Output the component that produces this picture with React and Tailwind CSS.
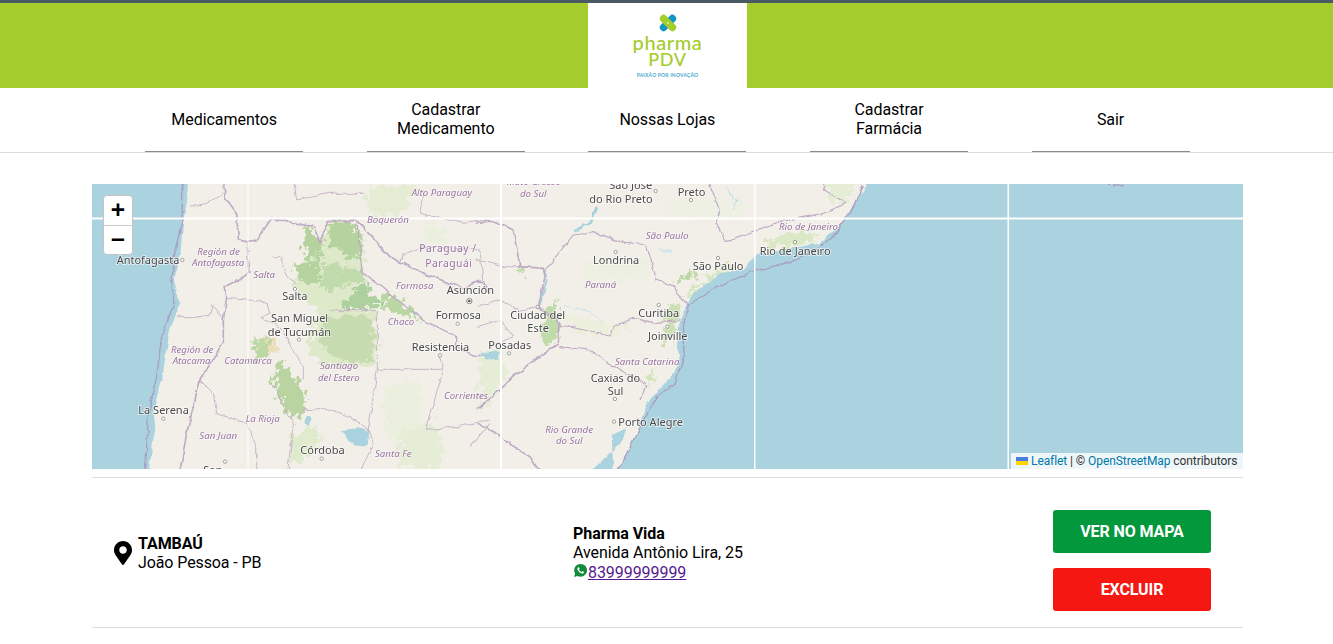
import React from "react";
import { FaMapMarkerAlt } from "react-icons/fa";
import { IoLogoWhatsapp } from "react-icons/io";

const navItems = [["Medicamentos"], ["Cadastrar", "Medicamento"], ["Nossas Lojas"], ["Cadastrar", "Farmácia"], ["Sair"]];

const City = ({ x, y, children }) => (
  <text x={x} y={y} fontSize="33" fill="#484848" stroke="#ffffff" strokeOpacity="0.7" strokeWidth="5" paintOrder="stroke" fontFamily="'Noto Sans', sans-serif">{children}</text>
);
const Reg = ({ x, y, children }) => (
  <text x={x} y={y} fontSize="29" fontStyle="italic" fill="#9a72a0" stroke="#ffffff" strokeOpacity="0.55" strokeWidth="4" paintOrder="stroke" fontFamily="'Noto Sans', sans-serif">{children}</text>
);
const Dot = ({ x, y }) => <circle cx={x} cy={y} r="5" fill="#fff" stroke="#777" strokeWidth="2" />;
const Line = ({ p, w = 4, c = "#bfabc4" }) => <polyline points={p} fill="none" stroke={c} strokeWidth={w} strokeLinejoin="round" />;
const Patch = ({ p, c = "#c9dfaf" }) => <polygon points={p} fill={c} />;
const Big = ({ x, y, children }) => (
  <text x={x} y={y} fontSize="31" letterSpacing="1.5" fill="#9a72a0" stroke="#fff" strokeOpacity="0.55" strokeWidth="4" paintOrder="stroke" fontFamily="'Noto Sans', sans-serif">{children}</text>
);

function MapDrawing() {
  return (
    <svg viewBox="92 184 1151 285" className="block w-full h-full">
      <defs>
        <filter id="rough" filterUnits="userSpaceOnUse" x="-200" y="-200" width="2800" height="1400">
          <feTurbulence type="fractalNoise" baseFrequency="0.035" numOctaves="3" seed="4" result="n" />
          <feDisplacementMap in="SourceGraphic" in2="n" scale="14" xChannelSelector="R" yChannelSelector="G" />
          <feGaussianBlur stdDeviation="0.9" />
        </filter>
        <filter id="mottle" filterUnits="userSpaceOnUse" x="-200" y="-200" width="2800" height="1400">
          <feTurbulence type="fractalNoise" baseFrequency="0.045" numOctaves="4" seed="9" result="n" />
          <feDisplacementMap in="SourceGraphic" in2="n" scale="60" xChannelSelector="R" yChannelSelector="G" />
          <feGaussianBlur stdDeviation="2" />
        </filter>
        <filter id="soft" filterUnits="userSpaceOnUse" x="0" y="100" width="1400" height="500">
          <feGaussianBlur stdDeviation="0.25" />
        </filter>
      </defs>
      <rect x="92" y="184" width="1151" height="285" fill="#f2efe9" />
      <g transform="translate(90 180) scale(0.33333)">
        <g filter="url(#mottle)">
          <Patch p="650,140 690,185 715,125 790,125 820,180 820,295 750,390 860,390 860,560 700,560 650,500 690,380 640,370 610,300 640,230" c="#dde9c8" />
          <Patch p="650,140 690,185 700,150 690,240 640,230" c="#b4d39e" />
          <Patch p="715,125 790,125 820,200 790,240 720,200" c="#b4d39e" />
          <Patch p="610,260 690,235 690,300 640,310" c="#b4d39e" />
          <Patch p="700,250 800,270 820,295 740,330 690,330" c="#c2dbad" />
          <Patch p="820,300 880,380 750,390" c="#add19e" />
          <Patch p="700,410 850,410 850,540 770,550 690,500" c="#c6dcb0" />
          <Patch p="880,345 910,345 1000,425 930,400 880,380" c="#b9d6a3" />
          <Patch p="560,540 620,590 650,680 610,725 550,620" c="#b9d4a0" />
          <Patch p="490,480 535,475 545,530 490,535" c="#bdd7a5" />
          <Patch p="535,480 565,480 560,520 540,515" c="#ecdcb8" />
          <Patch p="600,770 680,735 690,800 600,865" c="#e0ebcd" />
          <Patch p="830,20 985,12 940,100 830,110" c="#e4edd4" />
          <Patch p="1010,130 1090,150 1060,200 1000,180" c="#ebefdd" />
          <Patch p="880,620 990,600 990,780 890,770" c="#ebefdd" />
          <Patch p="930,760 1040,720 1060,865 920,865" c="#e6edd6" />
        </g>
      </g>
      <g transform="translate(480 180) scale(0.33333)">
        <g filter="url(#mottle)">
          <Patch p="1040,12 1130,12 1100,70 1050,60" c="#e4edd4" />
          <Patch p="575,310 640,270 650,290 590,310" c="#bdd8a6" />
          <Patch p="620,340 720,260 780,255 700,295 630,350" c="#d6e6c0" />
          <Patch p="840,185 920,165 1020,155 990,185 880,205" c="#dbe8c6" />
          <Patch p="570,370 605,360 595,420 575,490 545,490 555,420" c="#cde0b5" />
          <Patch p="200,395 235,355 235,470 200,500 180,480" c="#c1daa9" />
          <Patch p="110,270 140,265 130,290" c="#c1daa9" />
          <Patch p="500,590 530,570 510,620" c="#d3e4bd" />
          <Patch p="0,520 60,510 90,590 0,690" c="#e6edd6" />
          <Patch p="300,250 500,240 520,300 320,300" c="#edf0e0" />
          <Patch p="250,400 480,450 400,470 280,460" c="#ebefdc" />
          <Patch p="550,60 800,50 790,120 560,110" c="#eef0e3" />
        </g>
      </g>
      <g transform="translate(90 180) scale(0.33333)">
        <g filter="url(#rough)">
          <polygon points="-20,-20 288,-20 292,60 280,120 272,210 252,300 270,370 242,440 226,530 216,600 190,690 196,740 172,900 -20,900" fill="#aad3df" />
          <polygon points="752,757 805,742 835,752 830,795 795,797" fill="#aad3df" />
          <ellipse cx="655" cy="720" rx="9" ry="13" fill="#aad3df" />
          <Line p="280,-10 275,130 255,210 245,310 252,370 215,470 200,590 175,700 165,900" w="4" c="#a99dc0" />
          <Line p="400,-10 405,50 440,100 445,180 470,185 500,180 545,115 590,125 670,140 690,185 715,122 800,122 900,230 1000,280 1120,325 1170,300 1200,340" w="5" />
          <Line p="470,185 480,280 405,320 410,350 400,420 400,490 330,600 290,760 265,900" w="5" />
          <Line p="800,122 820,280 1000,420 1100,470 1100,500 1160,530 1200,520" w="4" />
          <Line p="410,355 530,365 540,400 510,410 570,440 640,560 640,600" w="2.5" />
          <Line p="720,392 862,392 862,568 1058,568 1050,530" w="2.5" />
          <Line p="862,568 835,750 850,790 800,900" w="2.5" />
          <Line p="550,620 610,730 590,900" w="2.5" />
          <Line p="640,690 700,685 800,720 835,750" w="2.5" />
          <Line p="400,420 370,375 360,410 260,410" w="2.5" />
          <Line p="330,600 370,640 380,700 470,730 500,800 500,900" w="2.5" />
          <Line p="1060,570 1040,640 1010,750 1100,740 1200,720" w="2.5" />
          <Line p="1140,800 1200,730" w="3" />
          <Line p="300,80 350,70 400,40" w="2.5" />
          <Line p="610,-10 620,60 700,40 825,40" w="2.5" />
          <Line p="1000,30 990,100 1120,130 1200,120" w="2.5" />
          <Line p="930,250 940,225 1000,200 1170,210 1180,320" w="2.5" />
          <Line p="550,230 570,230 590,290 620,310" w="2.5" />
        </g>
      </g>
      <g transform="translate(480 180) scale(0.33333)">
        <g filter="url(#rough)">
          <polygon points="1170,-20 1160,15 1105,100 1090,130 1040,170 1020,190 960,200 880,215 830,225 790,270 720,280 630,350 600,420 590,500 600,530 575,590 500,670 470,760 400,900 2400,900 2400,-20" fill="#aad3df" />
          <polygon points="395,765 440,745 425,790 370,840 335,870 400,870" fill="#aad3df" />
          <polygon points="0,515 60,515 55,540 20,535" fill="#aad3df" />
          <Line p="280,155 330,125 350,80" w="6" c="#a3cfdd" />
          <Line p="195,270 200,300 180,375" w="5" c="#a3cfdd" />
          <Line p="740,25 770,60 760,85" w="3" c="#b5dbe6" />
          <Line p="540,210 580,215" w="5" c="#cfe3ea" />
          <Line p="250,380 330,395 370,430" w="3" c="#cfe3ea" />
          <Line p="1150,15 1110,100 1050,180 950,240 820,275 720,315 625,375 610,440 615,520 585,610 530,650 470,760 400,900" w="4" c="#a99dc0" />
          <Line p="-10,130 50,125 100,150 120,260 190,265 195,290 175,380 240,430 235,490 180,530 100,590 60,630 -10,690" w="5" />
          <Line p="195,270 280,165 340,155 420,185 500,195 530,300 585,320 590,340 625,375" w="3.5" />
          <Line p="680,-10 720,90 710,130 735,185 830,150 900,125 1030,100 1100,70 1030,30 1040,-10" w="3.5" />
          <Line p="240,435 390,465 400,440 460,415 530,430 600,420" w="3.5" />
          <Line p="235,500 330,510 420,570 480,600 500,620 480,660" w="3.5" />
          <Line p="-10,730 50,760 100,800 150,830 195,900" w="5" />
          <Line p="-10,240 70,260 120,260" w="2.5" />
          <Line p="-10,380 60,360 120,390 170,380" w="2.5" />
          <Line p="-10,440 60,420 100,470 30,500" w="2.5" />
          <path d="M1880 12q14 -8 22 6q12 -12 26 -2" fill="none" stroke="#a99dc0" strokeWidth="4" />
        </g>
      </g>
      <g fill="#ffffff">
        <rect x="92" y="217.5" width="1151" height="2" />
        <rect x="247.5" y="184" width="1" height="285" />
        <rect x="500" y="184" width="2" height="285" />
        <rect x="754" y="184" width="1.5" height="285" />
        <rect x="1007.5" y="184" width="1.5" height="285" />
      </g>
      <g filter="url(#soft)">
        <g transform="translate(90 180) scale(0.33333)">
          <Reg x="965" y="48">Alto Paraguay</Reg>
          <Reg x="831" y="130">Boquerón</Reg>
          <Big x="988" y="217">Paraguay /</Big>
          <Big x="1006" y="260">Paraguái</Big>
          <Reg x="322" y="224">Región de</Reg>
          <Reg x="306" y="259">Antofagasta</Reg>
          <Reg x="490" y="294">Salta</Reg>
          <Reg x="918" y="327">Formosa</Reg>
          <Reg x="893" y="434">Chaco</Reg>
          <Reg x="243" y="518">Región de</Reg>
          <Reg x="248" y="553">Atacama</Reg>
          <Reg x="403" y="553">Catamarca</Reg>
          <Reg x="690" y="568">Santiago</Reg>
          <Reg x="684" y="603">del Estero</Reg>
          <Reg x="1062" y="657">Corrientes</Reg>
          <Reg x="467" y="727">La Rioja</Reg>
          <Reg x="328" y="778">San Juan</Reg>
          <Reg x="855" y="832">Santa Fe</Reg>
          <Dot x="277" y="240" /><Dot x="615" y="327" /><Dot x="627" y="479" /><Dot x="1103" y="431" /><Dot x="1050" y="526" /><Dot x="220" y="716" /><Dot x="695" y="836" /><Dot x="405" y="845" />
          <circle cx="1138" cy="363" r="8" fill="#fff" stroke="#555" strokeWidth="2" /><circle cx="1138" cy="363" r="4" fill="#555" />
          <City x="80" y="252">Antofagasta</City>
          <City x="577" y="360">Salta</City>
          <City x="543" y="427">San Miguel</City>
          <City x="533" y="467">de Tucumán</City>
          <City x="1070" y="343">Asunción</City>
          <City x="1037" y="417">Formosa</City>
          <City x="965" y="513">Resistencia</City>
          <City x="145" y="703">La Serena</City>
          <City x="631" y="823">Córdoba</City>
          <City x="340" y="882">San</City>
        </g>
        <g transform="translate(480 180) scale(0.33333)">
          <Reg x="80" y="16">Mato Grosso</Reg>
          <Reg x="120" y="52">do Sul</Reg>
          <Reg x="497" y="178">São Paulo</Reg>
          <Reg x="315" y="324">Paraná</Reg>
          <Reg x="897" y="150">Rio de Janeiro</Reg>
          <Reg x="405" y="556">Santa Catarina</Reg>
          <Reg x="196" y="758">Rio Grande</Reg>
          <Reg x="228" y="793">do Sul</Reg>
          <Dot x="527" y="33" /><Dot x="633" y="60" /><Dot x="407" y="216" /><Dot x="714" y="234" /><Dot x="945" y="186" /><Dot x="536" y="375" /><Dot x="562" y="440" /><Dot x="173" y="381" /><Dot x="87" y="520" /><Dot x="405" y="657" /><Dot x="402" y="725" />
          <City x="388" y="28">São José</City>
          <City x="328" y="68">do Rio Preto</City>
          <City x="593" y="48">Preto</City>
          <City x="339" y="251">Londrina</City>
          <City x="638" y="269">São Paulo</City>
          <City x="839" y="226">Rio de Janeiro</City>
          <City x="475" y="410">Curitiba</City>
          <City x="504" y="480">Joinville</City>
          <City x="91" y="416">Ciudad del</City>
          <City x="142" y="457">Este</City>
          <City x="25" y="507">Posadas</City>
          <City x="332" y="605">Caxias do</City>
          <City x="383" y="646">Sul</City>
          <City x="415" y="738">Porto Alegre</City>
        </g>
      </g>
    </svg>
  );
}

function Logo() {
  return (
    <div className="ml-[588px] w-[159px] h-[85px] bg-white flex flex-col items-center pt-[10px]">
      <svg width="20" height="20" viewBox="0 0 24 24" className="block">
        <rect x="0" y="7.5" width="24" height="9" rx="4.5" fill="#1496c4" transform="rotate(-45 12 12)" />
        <rect x="0" y="7.5" width="24" height="9" rx="4.5" fill="#a4ce2c" transform="rotate(45 12 12)" />
        <circle cx="12" cy="12" r="1" fill="#fff" />
      </svg>
      <div className="font-['Lato',sans-serif] font-medium text-[20px] leading-[18px] tracking-[0.6px] text-[#a3cc2c]">pharma</div>
      <div className="font-['Lato',sans-serif] font-medium text-[18px] leading-[16px] tracking-[0.6px] text-[#a3cc2c]">PDV</div>
      <div className="font-['Lato',sans-serif] font-bold text-[5px] leading-[6px] tracking-[0.2px] text-[#4aa8d0] mt-[5px]">PAIXÃO POR INOVAÇÃO</div>
    </div>
  );
}

export default function App() {
  return (
    <div className="min-h-[644px] bg-white font-['Roboto',sans-serif] text-black text-base overflow-hidden">
      <header className="h-[88px] bg-[#a3cc2c] border-t-[3px] border-[#4a5a63] flex">
        <Logo />
      </header>
      <nav className="h-[65px] border-b border-[#dcdcdc]">
        <div className="w-[1108px] h-full ml-[113.4px] grid grid-cols-5">
          {navItems.map((lines, i) => (
            <div key={i} className={lines.length > 1
              ? "w-[158px] h-[64px] justify-self-center flex flex-col items-center justify-center border-b border-[#8a8a8a] text-[16px] leading-[19px] tracking-[-0.05px] text-center pb-[2px]"
              : "w-[158px] h-[64px] justify-self-center flex flex-col items-center justify-center border-b border-[#8a8a8a] text-[16px] leading-[19px] tracking-[-0.05px] text-center"}>
              {lines.map((l) => <span key={l}>{l}</span>)}
            </div>
          ))}
        </div>
      </nav>
      <main className="w-[1151px] ml-[92px] pt-[31px]">
        <div className="relative h-[285px] overflow-hidden">
          <MapDrawing />
          <div className="absolute left-[11px] top-[11px] w-[30px] h-[60px] bg-white rounded-[4px] border border-[#c4c4c4] flex flex-col font-['DejaVu_Sans_Mono',monospace] font-bold text-[23px] text-black">
            <div className="h-[30px] flex items-center justify-center border-b border-[#ccc] pb-[3px]">+</div>
            <div className="h-[29px] flex items-center justify-center pb-[3px]">−</div>
          </div>
          <div className="absolute right-0 bottom-0 h-[16px] w-[232px] bg-white/80 flex items-center pl-[5px] text-[12px] leading-[16px] tracking-[-0.08px] text-[#333] whitespace-nowrap">
            <svg width="12" height="8" viewBox="0 0 12 8" className="mr-[3px]">
              <rect width="12" height="4" fill="#4C7BE1" />
              <rect y="4" width="12" height="4" fill="#FFD500" />
            </svg>
            <span className="text-[#0078A8]">Leaflet</span>
            <span>&nbsp;| ©&nbsp;</span>
            <span className="text-[#0078A8]">OpenStreetMap</span>
            <span>&nbsp;contributors</span>
          </div>
        </div>
        <div className="mt-[8px] h-[151px] border-y border-[#dcdcdc] flex items-center text-[16px] leading-[19px]">
          <div className="w-[481px] pl-[22px] flex items-center gap-[6px]">
            <FaMapMarkerAlt className="w-[18px] h-[24px] text-black" />
            <div className="tracking-[-0.1px]">
              <div className="font-bold">TAMBAÚ</div>
              <div>João Pessoa - PB</div>
            </div>
          </div>
          <div className="w-[480px] tracking-[-0.06px]">
            <div className="font-bold">Pharma Vida</div>
            <div>Avenida Antônio Lira, 25</div>
            <div className="flex items-start mt-[1px]">
              <IoLogoWhatsapp className="w-[15px] h-[15px] text-[#128c3c]" />
              <a href="#" className="underline text-[#551a8b]">83999999999</a>
            </div>
          </div>
          <div className="h-full pt-[32px] flex flex-col gap-[15px]">
            <button className="w-[158px] h-[43px] rounded-[3px] bg-[#03983b] text-white font-bold text-[16px] tracking-[-0.1px]">VER NO MAPA</button>
            <button className="w-[158px] h-[43px] rounded-[3px] bg-[#f41712] text-white font-bold text-[16px] tracking-[-0.1px]">EXCLUIR</button>
          </div>
        </div>
      </main>
    </div>
  );
}
